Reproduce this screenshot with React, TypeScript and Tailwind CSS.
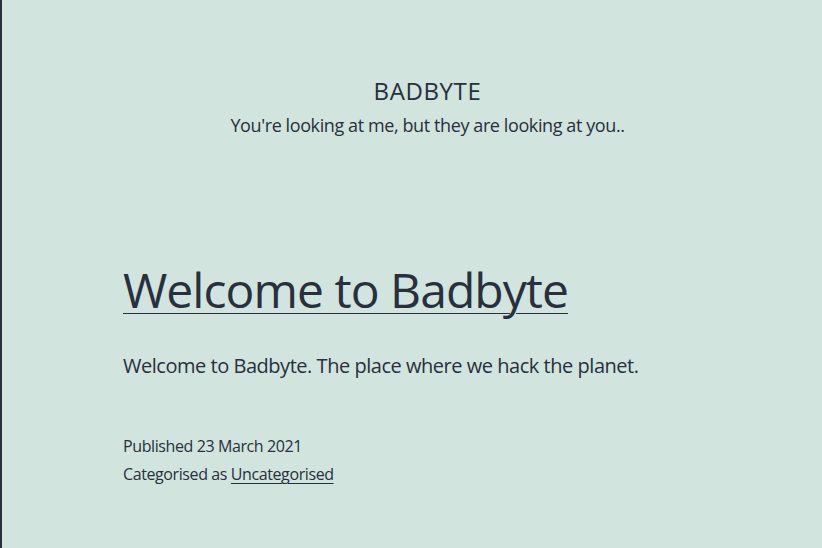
export default function App() {
  return (
    <div className="min-h-[548px] w-full bg-[#d1e4dd] border-l-2 border-[#28303d] text-[#28303d] font-['Open_Sans',sans-serif]">
      <header className="pt-[76px] pl-[31px] flex flex-col items-center">
        <p className="text-[24px] leading-[30px] uppercase tracking-[0.6px]">BADBYTE</p>
        <p className="mt-[7px] text-[18px] leading-[24px] tracking-[-0.4px]">
          You're looking at me, but they are looking at you..
        </p>
      </header>
      <main className="pl-[121px] pr-[121px]">
        <h1 className="mt-[126px] text-[48px] leading-[53px] tracking-[-0.95px]">
          <a href="#" className="underline decoration-1 underline-offset-[5px]">
            Welcome to Badbyte
          </a>
        </h1>
        <p className="mt-[35px] text-[20px] leading-[30px] tracking-[-0.47px]">
          Welcome to Badbyte. The place where we hack the planet.
        </p>
        <div className="mt-[51px] text-[16px] leading-[28px] tracking-[-0.4px]">
          <p>Published 23 March 2021</p>
          <p>
            Categorised as{' '}
            <a href="#" className="underline decoration-1 underline-offset-[3px]">
              Uncategorised
            </a>
          </p>
        </div>
      </main>
    </div>
  );
}
